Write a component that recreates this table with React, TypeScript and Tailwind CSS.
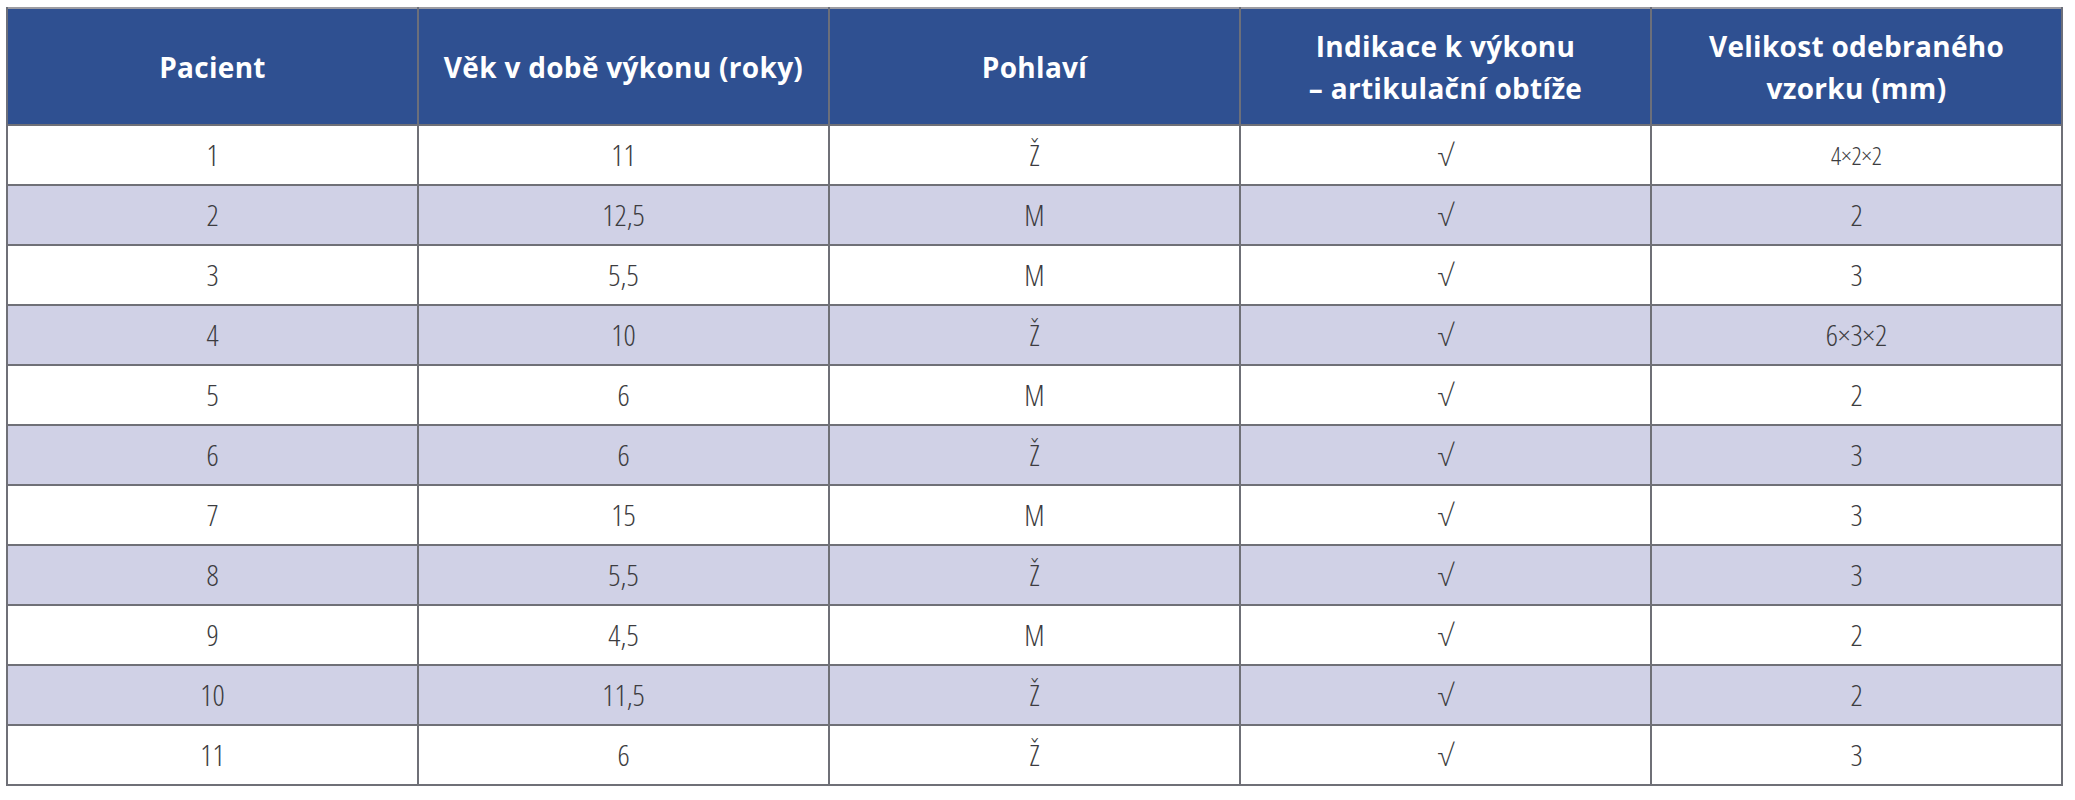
const headers = [
  ["Pacient"],
  ["Věk v době výkonu (roky)"],
  ["Pohlaví"],
  ["Indikace k výkonu", "– artikulační obtíže"],
  ["Velikost odebraného", "vzorku (mm)"],
];

const rows: [string, string, string, string, string][] = [
  ["1", "11", "Ž", "√", "4×2×2"],
  ["2", "12,5", "M", "√", "2"],
  ["3", "5,5", "M", "√", "3"],
  ["4", "10", "Ž", "√", "6×3×2"],
  ["5", "6", "M", "√", "2"],
  ["6", "6", "Ž", "√", "3"],
  ["7", "15", "M", "√", "3"],
  ["8", "5,5", "Ž", "√", "3"],
  ["9", "4,5", "M", "√", "2"],
  ["10", "11,5", "Ž", "√", "2"],
  ["11", "6", "Ž", "√", "3"],
];

export default function App() {
  return (
    <div className="w-[2075px] h-[800px] bg-white pl-[6px] pt-[7px]">
      <table className="w-[2057px] table-fixed border-collapse border-2 border-[#9c9ca2] font-['Open_Sans',sans-serif]">
        <thead>
          <tr className="h-[117px] bg-[#2f5091]">
            {headers.map((h, i) => (
              <th
                key={i}
                className="border-x-2 border-[#6c6f7a] px-2 text-center align-middle text-[28px] font-bold leading-[42px] tracking-[0.3px] text-white"
              >
                {h.map((line) => (
                  <div key={line}>{line}</div>
                ))}
              </th>
            ))}
          </tr>
        </thead>
        <tbody>
          {rows.map((r, i) => (
            <tr
              key={i}
              className={`h-[60px] ${i % 2 === 1 ? "bg-[#d0d1e6]" : "bg-white"}`}
            >
              {r.map((c, j) => (
                <td
                  key={j}
                  className={`border-2 border-[#6f7077] text-center align-middle font-light leading-none text-[#3c3c40] [font-stretch:80%] ${
                    i === 0 && j === 4 ? "text-[25px]" : "text-[30px]"
                  }`}
                >
                  {c}
                </td>
              ))}
            </tr>
          ))}
        </tbody>
      </table>
    </div>
  );
}
